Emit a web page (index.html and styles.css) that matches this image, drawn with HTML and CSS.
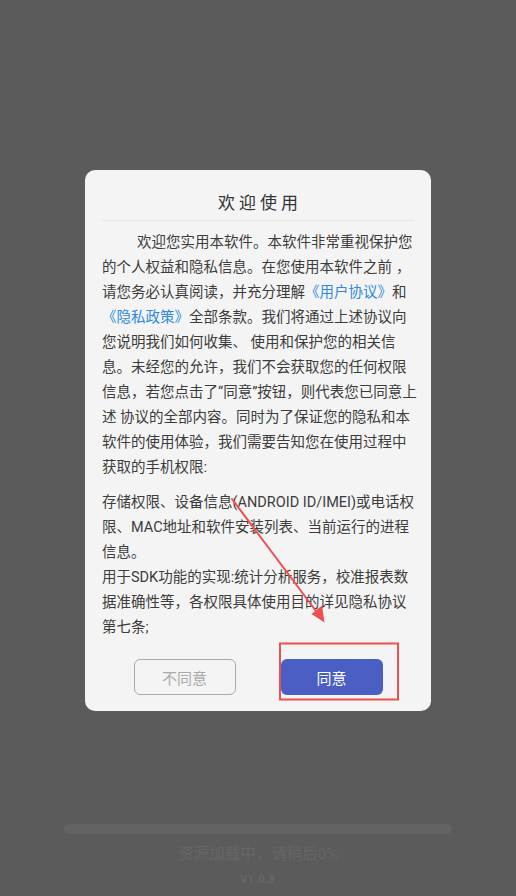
FILE: index.html
```html
<!DOCTYPE html>
<html lang="zh-CN">
<head>
<meta charset="utf-8">
<title>欢迎使用</title>
<link rel="stylesheet" href="styles.css">
</head>
<body>
<div class="page">
  <div class="loading">
    <div class="progress"><div class="progress-fill"></div></div>
    <div class="loading-text">资源加载中，请稍后0%</div>
    <div class="version">V1.0.8</div>
  </div>

  <div class="overlay">
    <div class="dialog">
      <div class="dialog-title">欢迎使用</div>
      <div class="divider"></div>
      <div class="dialog-body">
        <p class="para para-first">欢迎您实用本软件。本软件非常重视保护您<br>的个人权益和隐私信息。在您使用本软件之前<span class="wide">，</span><br>请您务必认真阅读，并充分理解<a class="link">《用户协议》</a>和<br><a class="link">《隐私政策》</a>全部条款。我们将通过上述协议向<br>您说明我们如何收集、 使用和保护您的相关信<br>息。未经您的允许，我们不会获取您的任何权限<br>信息，若您点击了“同意”按钮，则代表您已同意上<br>述 协议的全部内容。同时为了保证您的隐私和本<br>软件的使用体验，我们需要告知您在使用过程中<br>获取的手机权限:</p>
        <p class="para">存储权限、设备信息(ANDROID ID/IMEI)或电话权<br>限、MAC地址和软件安装列表、当前运行的进程<br>信息。<br>用于SDK功能的实现:统计分析服务，校准报表数<br>据准确性等，各权限具体使用目的详见隐私协议<br>第七条;</p>
      </div>
      <div class="dialog-actions">
        <button class="btn btn-cancel">不同意</button>
        <button class="btn btn-ok">同意</button>
      </div>
    </div>
  </div>

  <svg class="annotation" width="516" height="896" viewBox="0 0 516 896" xmlns="http://www.w3.org/2000/svg">
    <rect x="280" y="643.5" width="118" height="56" fill="none" stroke="#f04f4f" stroke-width="2"/>
    <line x1="232" y1="499" x2="319" y2="615" stroke="#f04f4f" stroke-width="2" stroke-linecap="round"/>
    <polygon points="324.5,622.5 311.5,614 322,605.5" fill="#f04f4f"/>
  </svg>
</div>
</body>
</html>
```

FILE: styles.css
```css
* {
  box-sizing: border-box;
}

html, body {
  margin: 0;
  padding: 0;
}

body {
  background: #5b5b5b;
  font-family: Roboto, "Noto Sans CJK SC", sans-serif;
}

.page {
  position: relative;
  width: 516px;
  height: 896px;
  overflow: hidden;
  display: flex;
  flex-direction: column;
  justify-content: flex-end;
}

.loading {
  display: flex;
  flex-direction: column;
  align-items: center;
  padding: 0 64px 9px;
}

.progress {
  width: 100%;
  height: 10px;
  border-radius: 5px;
  background: #636363;
}

.progress-fill {
  width: 0;
  height: 100%;
}

.loading-text {
  margin-top: 9px;
  font-size: 15.5px;
  line-height: 22px;
  color: #666666;
}

.version {
  margin-top: 8px;
  font-size: 10px;
  line-height: 14px;
  font-weight: bold;
  letter-spacing: 1px;
  color: #686868;
}

.overlay {
  position: absolute;
  left: 0;
  top: 0;
  width: 100%;
  padding: 170px 0 0 85px;
}

.dialog {
  width: 346px;
  background: #f4f4f4;
  border-radius: 10px;
  padding: 20px 17px 16px;
}

.dialog-title {
  text-align: center;
  font-size: 17px;
  line-height: 26px;
  letter-spacing: 4px;
  padding-left: 4px;
  color: #333333;
}

.divider {
  height: 1px;
  margin-top: 4px;
  background: #ebe4dd;
}

.dialog-body {
  margin-top: 9px;
  font-size: 14.5px;
  line-height: 25px;
  color: #3c3c3c;
  white-space: nowrap;
}

.para {
  margin: 0;
}

.para + .para {
  margin-top: 10px;
}

.para-first {
  text-indent: 35px;
}

.wide {
  padding-left: 4px;
}

.link {
  color: #2f89e0;
  text-decoration: none;
}

.dialog-actions {
  margin-top: 19px;
  display: flex;
  justify-content: center;
  gap: 45px;
}

.btn {
  width: 102px;
  height: 36px;
  border-radius: 6px;
  font-family: Roboto, "Noto Sans CJK SC", sans-serif;
  font-size: 15px;
  padding: 0;
}

.btn-cancel {
  background: transparent;
  border: 1.5px solid #aaaaaa;
  color: #aaaaaa;
}

.btn-ok {
  background: #4a5ec3;
  border: none;
  color: #ffffff;
}

.annotation {
  position: absolute;
  left: 0;
  top: 0;
  pointer-events: none;
}
```
